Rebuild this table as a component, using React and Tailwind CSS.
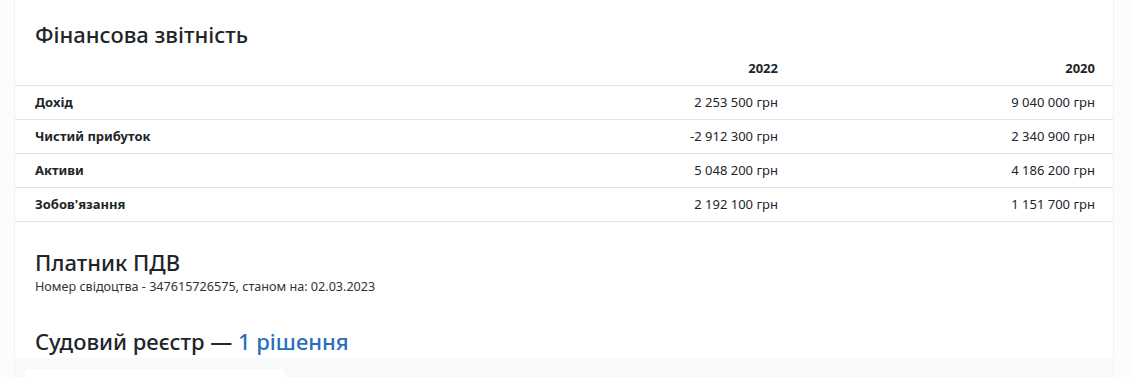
export default function App() {
  const rows = [
    ["Дохід", "2 253 500 грн", "9 040 000 грн"],
    ["Чистий прибуток", "-2 912 300 грн", "2 340 900 грн"],
    ["Активи", "5 048 200 грн", "4 186 200 грн"],
    ["Зобов'язання", "2 192 100 грн", "1 151 700 грн"],
  ];
  return (
    <div className="min-h-[377px] h-[377px] overflow-hidden bg-[#fcfcfc] text-[#212529]" style={{ fontFamily: '"Noto Sans", "Open Sans", sans-serif' }}>
      <div className="ml-[14px] w-[1100px] h-full bg-white border-l border-r border-[#f3f3f3]">
        <h2 className="pl-[20px] pt-[19px] text-[22px] leading-[30px] font-medium">Фінансова звітність</h2>
        <div className="mt-[7px]">
          <div className="grid grid-cols-[466px_317px_317px] h-[30px] border-b border-[#e3e3e3] text-[13px] font-bold">
            <div></div>
            <div className="text-right pr-[20px] leading-[25px]">2022</div>
            <div className="text-right pr-[20px] leading-[25px]">2020</div>
          </div>
          {rows.map((r) => (
            <div key={r[0]} className="grid grid-cols-[466px_317px_317px] h-[34px] border-b border-[#e3e3e3] text-[13px] items-center">
              <div className="pl-[20px] font-bold">{r[0]}</div>
              <div className="text-right pr-[20px]">{r[1]}</div>
              <div className="text-right pr-[20px]">{r[2]}</div>
            </div>
          ))}
        </div>
        <div className="pl-[20px] pt-[25px]">
          <h2 className="text-[22px] leading-[30px] font-medium">Платник ПДВ</h2>
          <p className="text-[12.6px] leading-[20px] text-[#333]">Номер свідоцтва - 347615726575, станом на: 02.03.2023</p>
        </div>
        <h2 className="pl-[20px] pt-[29px] pb-[2px] text-[22px] leading-[30px] font-medium">
          Судовий реєстр — <span className="text-[#2a6fba]">1 рішення</span>
        </h2>
        <div className="bg-[#f8f9fa] h-[40px] pt-[11px] pl-[10px]">
          <div className="w-[259px] h-[40px] bg-white rounded-[4px]"></div>
        </div>
      </div>
    </div>
  );
}
